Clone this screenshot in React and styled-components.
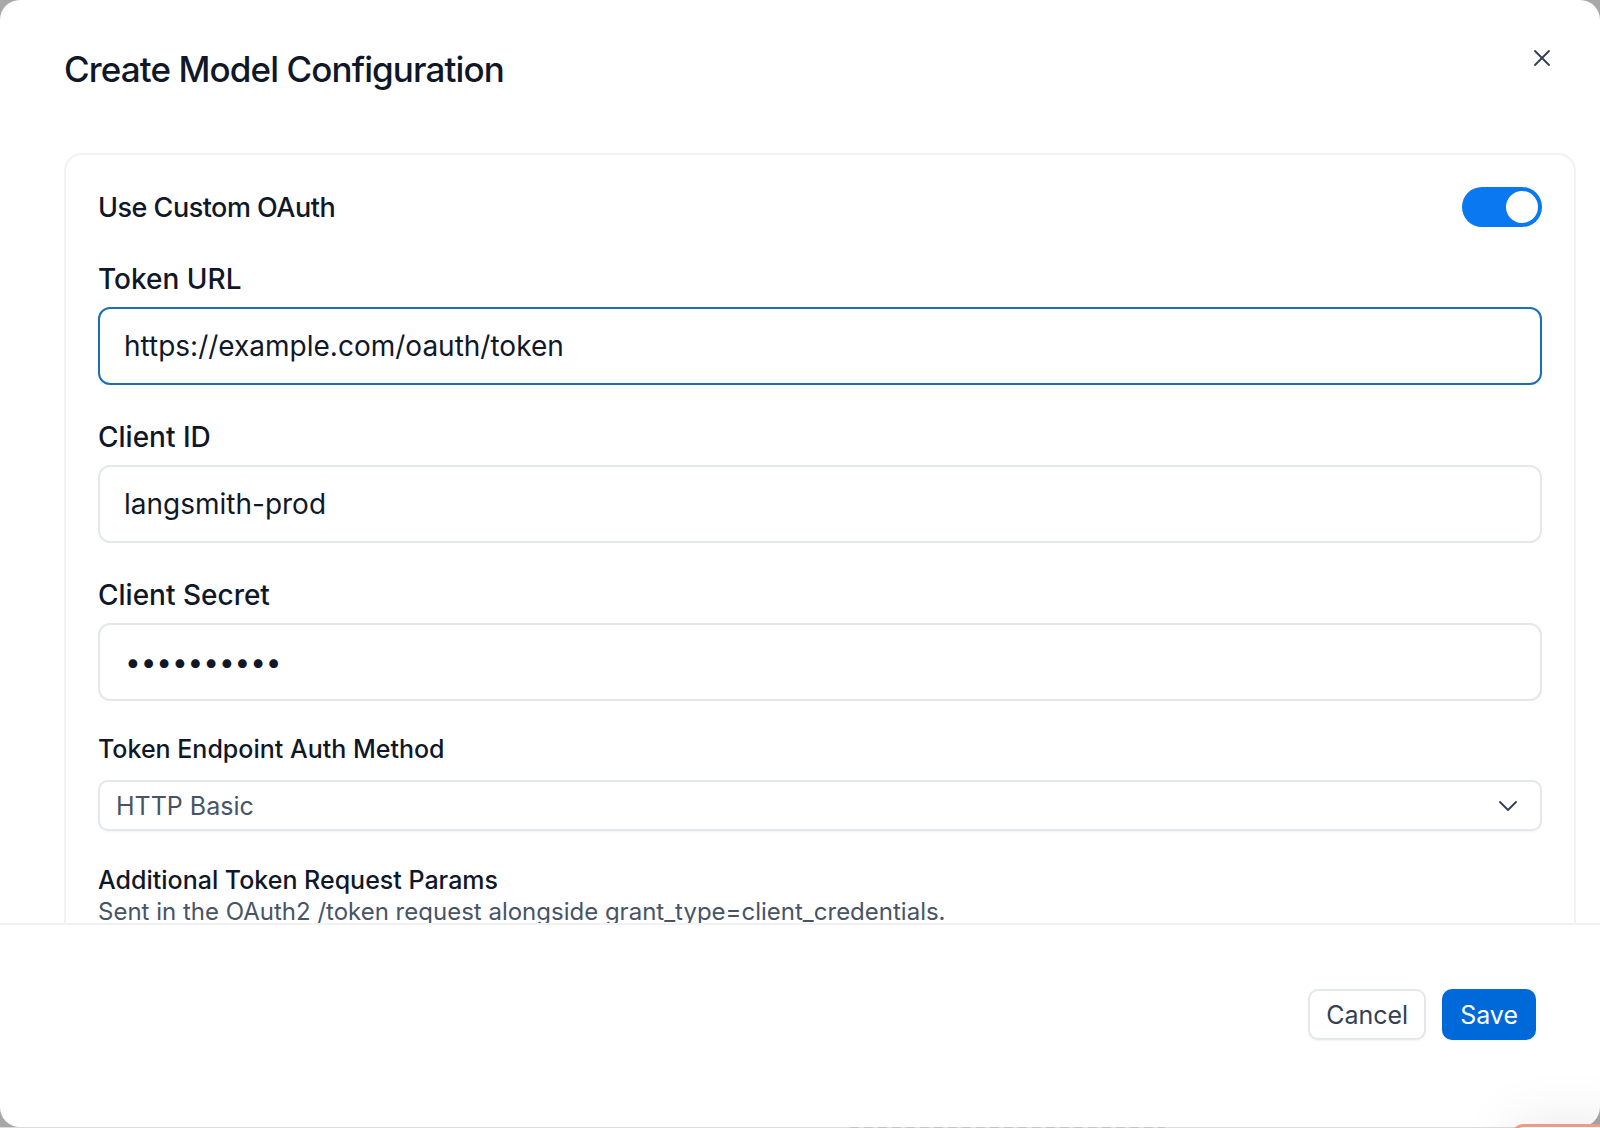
import React from 'react';
import styled, { createGlobalStyle } from 'styled-components';
import { X, ChevronDown } from 'lucide-react';

const Global = createGlobalStyle`
	html, body {
		margin: 0;
		padding: 0;
		background: #a8a8a8;
	}
	* {
		box-sizing: border-box;
	}
`;

const Page = styled.div`
	position: relative;
	display: flex;
	flex-direction: column;
	width: 1600px;
	height: 1128px;
	overflow: hidden;
	background: #a8a8a8;
	font-family: Inter, "Noto Sans", sans-serif;
	color: #101828;
`;

const Modal = styled.div`
	display: flex;
	flex-direction: column;
	height: 1127px;
	flex: none;
	background: #fff;
	border-radius: 20px;
	overflow: hidden;
`;

const Header = styled.div`
	display: flex;
	justify-content: space-between;
	flex: none;
	height: 153px;
	padding: 46px 44px 0 64px;
`;

const Title = styled.h2`
	margin: 0;
	font-size: 35px;
	line-height: 46px;
	font-weight: 500;
	letter-spacing: -0.9px;
	color: #101828;
`;

const CloseButton = styled.button`
	display: flex;
	width: 28px;
	height: 28px;
	margin-top: -2px;
	padding: 0;
	border: 0;
	background: none;
	color: #344054;
`;

const Body = styled.div`
	flex: 1;
	min-height: 0;
	padding: 0 24px 0 64px;
	overflow: hidden;
`;

const Card = styled.div`
	display: flex;
	flex-direction: column;
	padding: 32px 32px 40px;
	border: 2px solid #f0f2f5;
	border-radius: 18px;
`;

const ToggleRow = styled.div`
	display: flex;
	justify-content: space-between;
	align-items: center;
	height: 40px;
	margin-bottom: 35px;
`;

const ToggleLabel = styled.span`
	font-size: 27px;
	font-weight: 500;
	letter-spacing: -0.5px;
`;

const Switch = styled.div`
	display: flex;
	justify-content: flex-end;
	align-items: center;
	width: 80px;
	height: 40px;
	padding: 4px;
	border-radius: 20px;
	background: #0a78f0;
`;

const Knob = styled.div`
	width: 32px;
	height: 32px;
	border-radius: 50%;
	background: #fff;
`;

const Label = styled.label`
	display: block;
	font-size: ${p => p.$small ? 25 : 28}px;
	line-height: ${p => p.$small ? 32 : 34}px;
	font-weight: 500;
	color: #101828;
`;

const Field = styled.div`
	margin-bottom: ${p => p.$gap}px;
`;

const Input = styled.div`
	display: flex;
	align-items: center;
	height: 78px;
	margin-top: 11px;
	padding: 0 24px;
	border: 2px solid ${p => p.$focus ? '#1a6fb8' : '#e4e7ec'};
	border-radius: 12px;
	font-size: 28px;
	color: #101828;
`;

const Dots = styled.span`
	margin-left: 1px;
	font-size: 28px;
	letter-spacing: -0.1px;
`;

const Select = styled.div`
	display: flex;
	justify-content: space-between;
	align-items: center;
	height: 51px;
	margin-top: 15px;
	padding: 0 16px 0 16px;
	border: 2px solid #e4e7ec;
	border-radius: 10px;
	box-shadow: 0 1px 2px rgba(16, 24, 40, 0.05);
	font-size: 25px;
	color: #475467;
`;

const ParamsLabel = styled.div`
	font-size: 25px;
	line-height: 32px;
	font-weight: 500;
`;

const Hint = styled.div`
	font-size: 24px;
	line-height: 32px;
	color: #475467;
`;

const Footer = styled.div`
	display: flex;
	justify-content: flex-end;
	gap: 16px;
	flex: none;
	height: 204px;
	padding: 64px 64px 0 0;
	border-top: 2px solid #f0f2f5;
`;

const Button = styled.button`
	height: 51px;
	padding: 0 16px;
	border: 2px solid ${p => p.$primary ? '#0069d9' : '#e4e7ec'};
	border-radius: 10px;
	background: ${p => p.$primary ? '#0069d9' : '#fff'};
	box-shadow: 0 1px 2px rgba(16, 24, 40, 0.05);
	font-family: inherit;
	font-size: 25px;
	color: ${p => p.$primary ? '#fff' : '#344054'};
`;

/* one pixel of the page behind the dialog shows under it */
const BehindStrip = styled.div`
	flex: none;
	height: 1px;
	padding-left: 850px;
	background: #dcdcdc;
`;

const BehindText = styled.div`
	width: 315px;
	height: 1px;
	background: repeating-linear-gradient(90deg, #c4c4c4 0 9px, #dcdcdc 9px 14px);
`;

/* corner of a widget lying over the dialog */
const CornerWidget = styled.div`
	position: absolute;
	left: 1510px;
	top: 1124px;
	width: 120px;
	height: 40px;
	border: 3px solid #ee9a88;
	border-radius: 14px;
	background: #fff;
	box-shadow: 0 0 56px rgba(16, 24, 40, 0.1);
`;

export default function App(){
	return(
		<Page>
			<Global/>
			<Modal>
				<Header>
					<Title>Create Model Configuration</Title>
					<CloseButton><X size={28} strokeWidth={1.6}/></CloseButton>
				</Header>
				<Body>
					<Card>
						<ToggleRow>
							<ToggleLabel>Use Custom OAuth</ToggleLabel>
							<Switch><Knob/></Switch>
						</ToggleRow>
						<Field $gap={35}>
							<Label>Token URL</Label>
							<Input $focus>https://example.com/oauth/token</Input>
						</Field>
						<Field $gap={35}>
							<Label>Client ID</Label>
							<Input>langsmith-prod</Input>
						</Field>
						<Field $gap={32}>
							<Label>Client Secret</Label>
							<Input><Dots>••••••••••</Dots></Input>
						</Field>
						<Field $gap={33}>
							<Label $small>Token Endpoint Auth Method</Label>
							<Select>HTTP Basic<ChevronDown size={32} strokeWidth={1.4} color="#344054"/></Select>
						</Field>
						<ParamsLabel>Additional Token Request Params</ParamsLabel>
						<Hint>Sent in the OAuth2 /token request alongside grant_type=client_credentials.</Hint>
					</Card>
				</Body>
				<Footer>
					<Button>Cancel</Button>
					<Button $primary>Save</Button>
				</Footer>
			</Modal>
			<BehindStrip><BehindText/></BehindStrip>
			<CornerWidget/>
		</Page>
	);
}
